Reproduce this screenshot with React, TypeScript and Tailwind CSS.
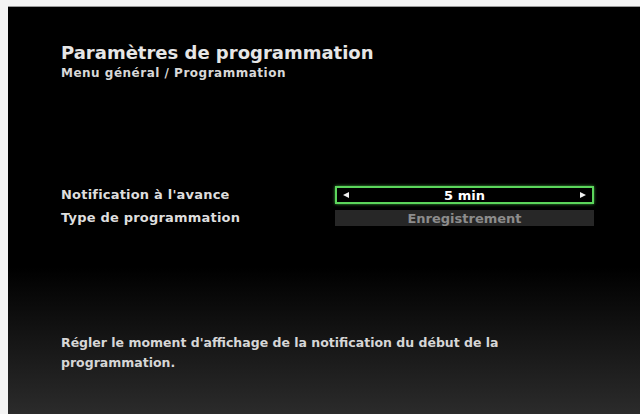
import React from "react";

const font = { fontFamily: '"DejaVu Sans", Verdana, sans-serif' };

export default function App() {
  return (
    <div className="w-[640px] h-[414px] bg-[#f4f4f4] pt-[6px] pl-[8px] overflow-hidden" style={font}>
      <div className="relative w-full h-[408px] border-t border-[#9a9a9a] bg-[linear-gradient(to_bottom,#000_0%,#000_64%,#2b2b2b_100%)] flex flex-col">
        <div className="pl-[53px] pt-[35px]">
          <div className="text-[18px] leading-[22px] font-bold text-[#e6e6e6]">Paramètres de programmation</div>
          <div className="mt-[2px] text-[12px] leading-[14px] font-bold text-[#d8d8d8] tracking-[0.5px]">Menu général / Programmation</div>
        </div>
        <div className="mt-[106px] pl-[53px] flex flex-col gap-[6px]">
          <div className="flex items-center h-[18px]">
            <div className="w-[274px] text-[13px] font-bold text-[#dedede] tracking-[0.2px]">Notification à l'avance</div>
            <div className="relative w-[259px] h-[18px] border-2 border-[#5cd65c] shadow-[0_0_3px_#3fa53f] bg-black flex items-center justify-center">
              <svg className="absolute left-[6px] top-[4px]" width="6" height="6" viewBox="0 0 6 6"><polygon points="6,0 6,6 0,3" fill="#f0f0f0" /></svg>
              <span className="text-[13px] font-semibold text-white leading-none">5 min</span>
              <svg className="absolute right-[6px] top-[4px]" width="6" height="6" viewBox="0 0 6 6"><polygon points="0,0 0,6 6,3" fill="#f0f0f0" /></svg>
            </div>
          </div>
          <div className="flex items-center h-[16px]">
            <div className="w-[274px] text-[13px] font-bold text-[#dedede] tracking-[0.2px]">Type de programmation</div>
            <div className="w-[259px] h-[16px] bg-[#272727] flex items-center justify-center">
              <span className="text-[13px] font-bold text-[#8c8c8c] leading-none">Enregistrement</span>
            </div>
          </div>
        </div>
        <div className="mt-[107px] pl-[53px] w-[510px] text-[12.5px] leading-[20px] font-bold text-[#d6d6d6]">
          Régler le moment d'affichage de la notification du début de la programmation.
        </div>
      </div>
    </div>
  );
}
